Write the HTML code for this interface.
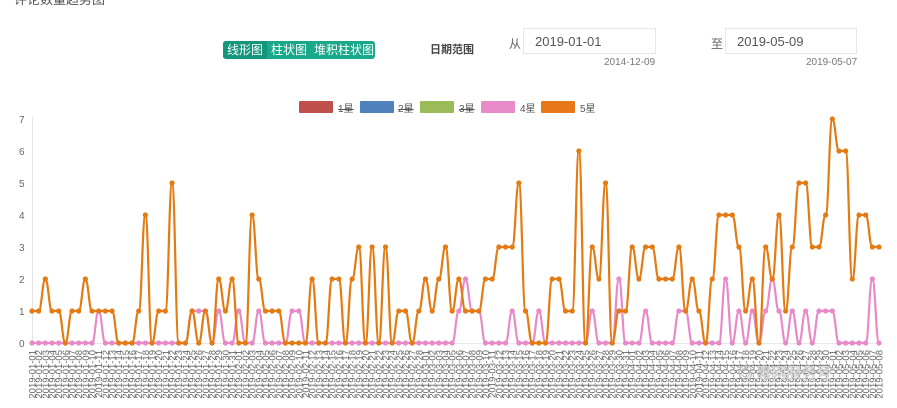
<!DOCTYPE html>
<html><head><meta charset="utf-8">
<style>
body{margin:0;width:897px;height:408px;overflow:hidden;background:#fff;font-family:"Liberation Sans","Noto Sans CJK SC",sans-serif;position:relative}
.a{position:absolute;white-space:nowrap}
.btn{position:absolute;left:223px;top:41px;height:18px;width:152px;background:#19a98a;border-radius:3px;color:#fff;font-size:12px;line-height:18px}
.btn span{position:absolute;top:0}
.inp{position:absolute;height:26px;border:1px solid #e6e6e6;font-size:13px;color:#555;line-height:26px;padding-left:11px;box-sizing:border-box}
.leg{position:absolute;top:101px;width:34px;height:12px;border-radius:1px}
.lt{position:absolute;top:100px;font-size:10px;color:#555}
</style></head><body>
<div class="a" style="left:14px;top:-11px;font-size:13px;color:#555">评论数量趋势图</div>
<div class="btn"><span style="left:0;width:44px;background:#14967a;border-radius:3px 0 0 3px;text-align:center">线形图</span><span style="left:48px">柱状图</span><span style="left:91px">堆积柱状图</span></div>
<div class="a" style="left:430px;top:41px;font-size:11px;color:#444;font-weight:bold">日期范围</div>
<div class="a" style="left:509px;top:35px;font-size:12px;color:#666">从</div>
<div class="inp" style="left:523px;top:28px;width:133px">2019-01-01</div>
<div class="a" style="left:604px;top:57px;font-size:10px;color:#777">2014-12-09</div>
<div class="a" style="left:711px;top:35px;font-size:12px;color:#666">至</div>
<div class="inp" style="left:725px;top:28px;width:132px">2019-05-09</div>
<div class="a" style="left:806px;top:57px;font-size:10px;color:#777">2019-05-07</div>
<div class="leg" style="left:299px;background:#c0504d"></div><div class="lt" style="left:338px;text-decoration:line-through">1星</div>
<div class="leg" style="left:360px;background:#4f81bd"></div><div class="lt" style="left:398px;text-decoration:line-through">2星</div>
<div class="leg" style="left:420px;background:#9bbb59"></div><div class="lt" style="left:459px;text-decoration:line-through">3星</div>
<div class="leg" style="left:481px;background:#e88ac8"></div><div class="lt" style="left:520px">4星</div>
<div class="leg" style="left:541px;background:#e6781a"></div><div class="lt" style="left:580px">5星</div>
<svg id="c" width="897" height="408" style="position:absolute;left:0;top:0"></svg>
<script>
var O=[1,1,2,1,1,0,1,1,2,1,1,1,1,0,0,0,1,4,0,1,1,5,0,0,1,0,1,0,2,1,2,0,0,4,2,1,1,1,0,0,0,0,2,0,0,2,2,0,2,3,0,3,0,3,0,1,1,0,1,2,1,2,3,1,2,1,1,1,2,2,3,3,3,5,1,0,0,0,2,2,1,1,6,0,3,2,5,0,1,1,3,2,3,3,2,2,2,3,1,2,1,0,2,4,4,4,3,1,2,0,3,2,4,1,3,5,5,3,3,4,7,6,6,2,4,4,3,3];
var P=[];for(var i=0;i<128;i++)P.push(0);
[10,24,25,26,28,31,34,39,40,64,66,67,72,76,84,92,97,98,106,108,110,112,114,116,118,119,120].forEach(function(i){P[i]=1});
[65,88,104,111,126].forEach(function(i){P[i]=2});
var X=function(i){return 32+i*(847/127)},Y=function(v){return 343-v*32};
var s='';
s+='<line x1="32.5" y1="117" x2="32.5" y2="344" stroke="#e4e4e4"/><line x1="32" y1="343.5" x2="880" y2="343.5" stroke="#e8e8e8"/>';
for(var v=0;v<=7;v++)s+='<text x="19" y="'+(Y(v)+4)+'" font-size="10" fill="#666" font-family="Liberation Sans">'+v+'</text>';
function path(d){var p='M'+X(0)+','+Y(d[0]);for(var i=0;i<d.length-1;i++){var x0=X(i),x1=X(i+1),y0=Y(d[i]),y1=Y(d[i+1]),dx=(x1-x0)*0.45;p+='C'+(x0+dx)+','+y0+' '+(x1-dx)+','+y1+' '+x1+','+y1;}return p}
function ser(d,c){var r='<path d="'+path(d)+'" fill="none" stroke="'+c+'" stroke-width="2.2"/>';d.forEach(function(v,i){r+='<circle cx="'+X(i)+'" cy="'+Y(v)+'" r="2.6" fill="'+c+'"/>'});return r}
s+=ser(P,'#e88ac8');s+=ser(O,'#e47a12');
var d0=new Date(2019,0,1);
for(var i=0;i<128;i++){var d=new Date(d0.getTime()+i*864e5);var t='2019-'+('0'+(d.getMonth()+1)).slice(-2)+'-'+('0'+d.getDate()).slice(-2);
s+='<text transform="translate('+(X(i)+3.5)+',350) rotate(-90)" text-anchor="end" font-size="9.5" fill="#666" font-family="Liberation Sans">'+t+'</text>';}
s+='<text x="738" y="378" font-size="15" fill="#fff" stroke="#bbb" stroke-width="0.6" font-family="Noto Sans CJK SC">◎ 惠网服务号</text>';
document.getElementById('c').innerHTML=s;
</script>
</body></html>
